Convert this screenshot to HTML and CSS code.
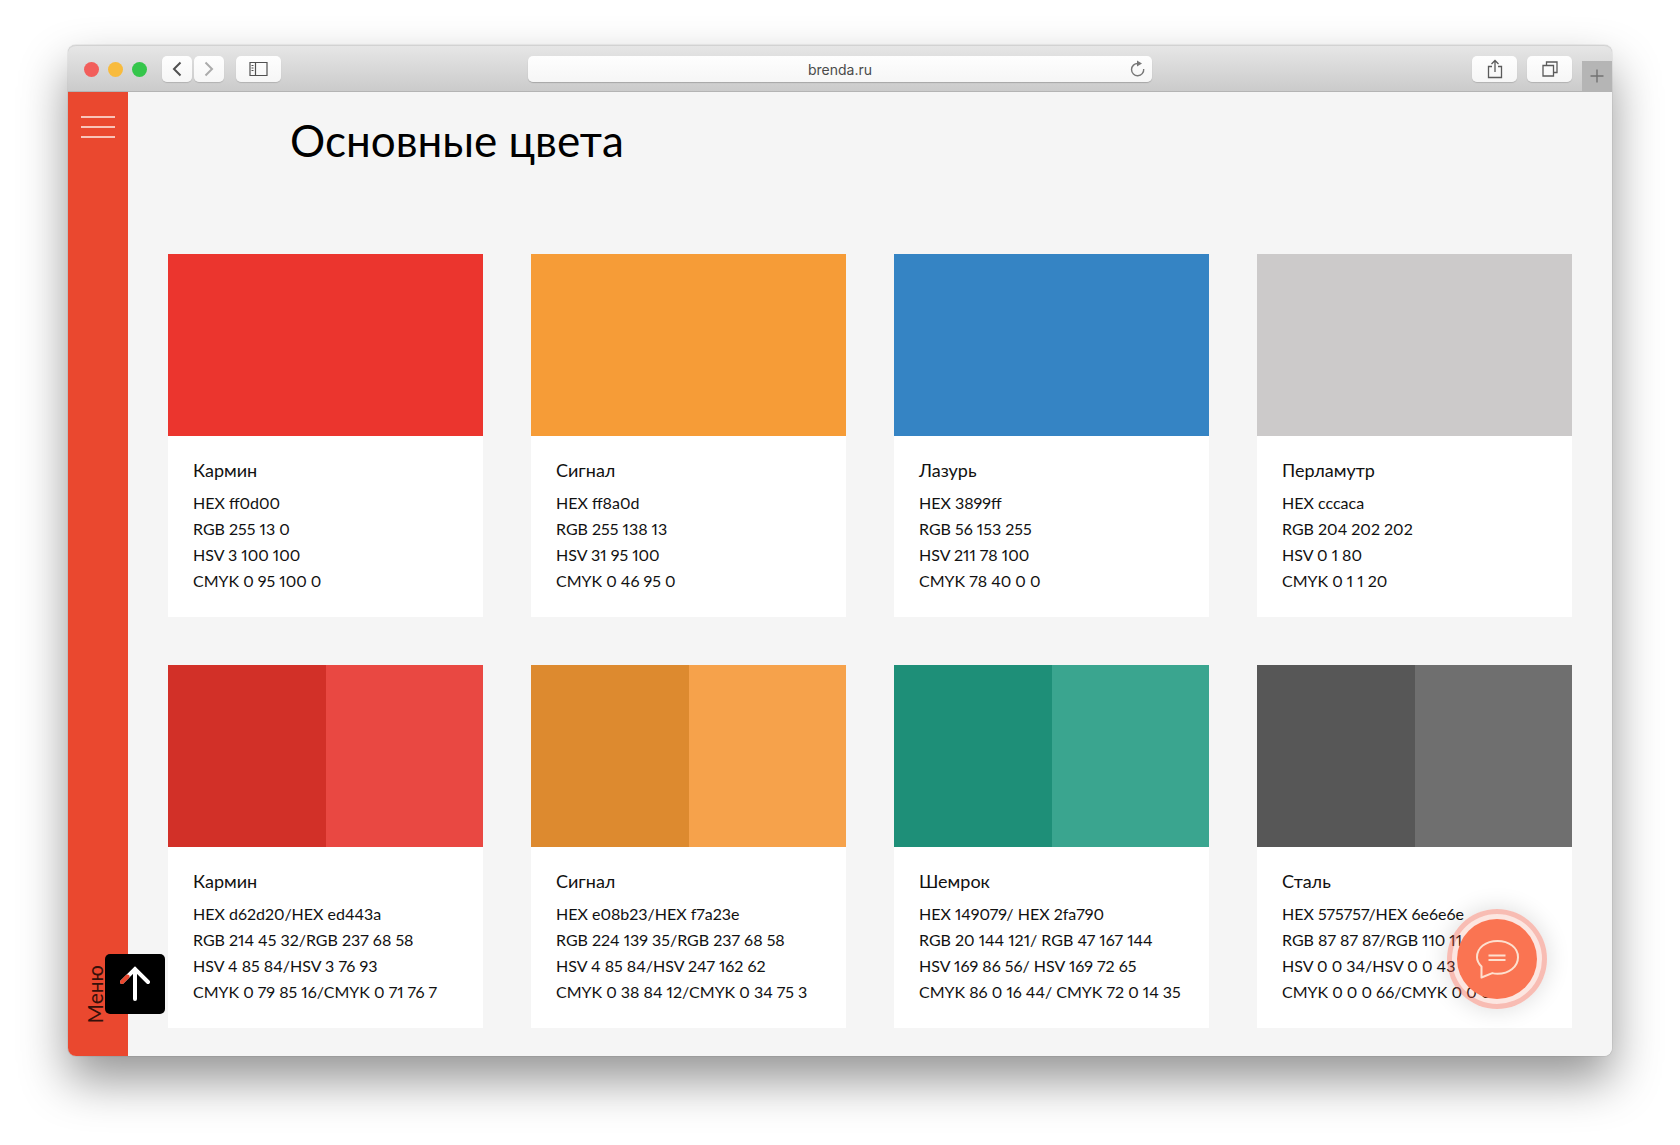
FILE: index.html
```html
<!DOCTYPE html>
<html lang="ru">
<head>
<meta charset="utf-8">
<meta name="viewport" content="width=device-width, initial-scale=1">
<title>Основные цвета</title>
<link rel="stylesheet" href="styles.css">
</head>
<body>
<div class="window">
  <header class="toolbar">
    <div class="toolbar-left">
      <div class="lights">
        <button class="light light-close" aria-label="Закрыть"></button>
        <button class="light light-minimize" aria-label="Свернуть"></button>
        <button class="light light-expand" aria-label="Развернуть"></button>
      </div>
      <div class="history">
        <button class="tool tool-small" aria-label="Назад"><svg width="12" height="16" viewBox="0 0 12 16"><path d="M9.500 1.500 3 8l6.500 6.500" stroke="#505050" stroke-width="2"/></svg></button>
        <button class="tool tool-small" aria-label="Вперёд"><svg width="12" height="16" viewBox="0 0 12 16"><path d="M2.500 1.500 9 8l-6.500 6.500" stroke="#ababab" stroke-width="2"/></svg></button>
      </div>
      <button class="tool" aria-label="Боковая панель"><svg width="20" height="16" viewBox="0 0 20 16"><path d="M1 1.500h17v13H1zM6.500 1.500v13M2.500 4.500h2M2.500 7h2M2.500 9.500h2" stroke="#505050" stroke-width="1.200"/></svg></button>
    </div>
    <div class="address">
      <input class="address-input" type="text" value="brenda.ru" aria-label="Адрес">
      <button class="reload" aria-label="Обновить"><svg width="16" height="18" viewBox="0 0 16 18"><path d="M13.700 9A6.100 6.100 0 1 1 8 3.500" stroke="#777" stroke-width="1.400"/><path d="M7 .4v6.200l5-3.100z" fill="#777"/></svg></button>
    </div>
    <div class="toolbar-right">
      <button class="tool" aria-label="Поделиться"><svg width="16" height="20" viewBox="0 0 16 20"><path d="M5 7.500H1.500v11h13v-11H11M8 13V1.500M4.500 5 8 1.500 11.500 5" stroke="#5a5a5a" stroke-width="1.300"/></svg></button>
      <button class="tool" aria-label="Вкладки"><svg width="16" height="16" viewBox="0 0 16 16"><path d="M1 4.500h10.500V15H1zM4.500 4.500V1H15v10.500h-3.500" stroke="#5a5a5a" stroke-width="1.300"/></svg></button>
      <button class="new-tab" aria-label="Новая вкладка"><svg width="14" height="14" viewBox="0 0 14 14"><path d="M7 .5v13M.5 7h13" stroke="#727272" stroke-width="1.400"/></svg></button>
    </div>
  </header>
  <div class="page">
    <nav class="sidebar">
      <button class="burger" aria-label="Открыть меню"><span></span><span></span><span></span></button>
      <a class="menu-link" href="#menu">Меню</a>
    </nav>
    <main class="content">
      <h1 class="heading">Основные цвета</h1>
      <div class="palette">
        <article class="card">
          <div class="swatch"><div class="carmine"></div></div>
          <div class="details"><h2>Кармин</h2><p>HEX ff0d00</p><p>RGB 255 13 0</p><p>HSV 3 100 100</p><p>CMYK 0 95 100 0</p></div>
        </article>
        <article class="card">
          <div class="swatch"><div class="signal"></div></div>
          <div class="details"><h2>Сигнал</h2><p>HEX ff8a0d</p><p>RGB 255 138 13</p><p>HSV 31 95 100</p><p>CMYK 0 46 95 0</p></div>
        </article>
        <article class="card">
          <div class="swatch"><div class="azure"></div></div>
          <div class="details"><h2>Лазурь</h2><p>HEX 3899ff</p><p>RGB 56 153 255</p><p>HSV 211 78 100</p><p>CMYK 78 40 0 0</p></div>
        </article>
        <article class="card">
          <div class="swatch"><div class="pearl"></div></div>
          <div class="details"><h2>Перламутр</h2><p>HEX cccaca</p><p>RGB 204 202 202</p><p>HSV 0 1 80</p><p>CMYK 0 1 1 20</p></div>
        </article>
        <article class="card">
          <div class="swatch"><div class="carmine-dark"></div><div class="carmine-light"></div></div>
          <div class="details"><h2>Кармин</h2><p>HEX d62d20/HEX ed443a</p><p>RGB 214 45 32/RGB 237 68 58</p><p>HSV 4 85 84/HSV 3 76 93</p><p>CMYK 0 79 85 16/CMYK 0 71 76 7</p></div>
        </article>
        <article class="card">
          <div class="swatch"><div class="signal-dark"></div><div class="signal-light"></div></div>
          <div class="details"><h2>Сигнал</h2><p>HEX e08b23/HEX f7a23e</p><p>RGB 224 139 35/RGB 237 68 58</p><p>HSV 4 85 84/HSV 247 162 62</p><p>CMYK 0 38 84 12/CMYK 0 34 75 3</p></div>
        </article>
        <article class="card">
          <div class="swatch"><div class="shamrock-dark"></div><div class="shamrock-light"></div></div>
          <div class="details"><h2>Шемрок</h2><p>HEX 149079/ HEX 2fa790</p><p>RGB 20 144 121/ RGB 47 167 144</p><p>HSV 169 86 56/ HSV 169 72 65</p><p>CMYK 86 0 16 44/ CMYK 72 0 14 35</p></div>
        </article>
        <article class="card">
          <div class="swatch"><div class="steel-dark"></div><div class="steel-light"></div></div>
          <div class="details"><h2>Сталь</h2><p>HEX 575757/HEX 6e6e6e</p><p>RGB 87 87 87/RGB 110 11</p><p>HSV 0 0 34/HSV 0 0 43</p><p>CMYK 0 0 0 66/CMYK 0 0 0</p></div>
        </article>
      </div>
    </main>
    <button class="to-top" aria-label="Наверх"><svg width="30" height="36" viewBox="0 0 30 36"><path d="M15 33V3M2 16 15 3l13 13" stroke="#fff" stroke-width="4" stroke-linecap="round"/><path d="M2 16 7.500 10.500" stroke="#e8482f" stroke-width="4" stroke-linecap="round"/></svg></button>
    <button class="chat" aria-label="Чат"><span class="chat-disc"><svg width="44" height="40" viewBox="0 0 44 40"><path d="M6.500 38.500V27.500C3.800 24.700 2 21.500 2 18.200 2 8.800 10.800 2 22.500 2S43 8.800 43 18.200s-8.800 16.500-20.500 16.500c-2 0-3.600-.2-5.200-.6zM13.500 16.500h17M13.500 21h17" stroke="#fde0cf" stroke-width="2" stroke-linejoin="round"/></svg></span></button>
  </div>
</div>
</body>
</html>
```
FILE: styles.css
```css
* {
  box-sizing: border-box;
}

body {
  margin: 0;
  padding: 45px 68px 90px;
  background: #fff;
  color: #111;
  font-family: Lato, "Open Sans", sans-serif;
}

h1, h2, p {
  margin: 0;
  font-weight: 400;
}

button {
  padding: 0;
  border: 0;
  background: none;
}

svg {
  display: block;
  fill: none;
}

.window {
  border-radius: 8px;
  box-shadow: 0 0 1px rgba(0, 0, 0, .5), 0 24px 48px rgba(0, 0, 0, .42);
}

.toolbar {
  display: grid;
  grid-template-columns: 460fr 624fr 460fr;
  align-items: center;
  height: 47px;
  padding-top: 1px;
  border-top: 1px solid #d2d2d2;
  border-bottom: 1px solid #b4b4b4;
  border-radius: 8px 8px 0 0;
  background: linear-gradient(#e6e6e6, #cbcbcb);
}

.toolbar-left,
.toolbar-right {
  display: flex;
  align-items: center;
}

.toolbar-left {
  gap: 12px;
  padding-left: 16px;
}

.toolbar-right {
  justify-content: flex-end;
  gap: 10px;
  height: 100%;
}

.lights {
  display: flex;
  gap: 9px;
  margin-right: 3px;
}

.light {
  width: 15px;
  height: 15px;
  border-radius: 50%;
}

.light-close { background: #f25e5b; }
.light-minimize { background: #f8bb3d; }
.light-expand { background: #35c64b; }

.history {
  display: flex;
  gap: 2px;
}

.tool {
  display: grid;
  place-items: center;
  width: 45px;
  height: 26px;
  border-radius: 5px;
  background: linear-gradient(#fefefe, #f6f6f6);
  box-shadow: 0 1px 1px rgba(0, 0, 0, .15);
}

.tool-small {
  width: 30px;
}

.new-tab {
  display: grid;
  place-items: center;
  align-self: flex-end;
  width: 30px;
  height: 30px;
  background: #b5b5b5;
}

.address {
  display: flex;
  align-items: center;
  height: 26px;
  padding: 0 6px 0 22px;
  border-radius: 5px;
  background: linear-gradient(#fefefe, #f6f6f6);
  box-shadow: 0 1px 1px rgba(0, 0, 0, .2);
}

.address-input {
  flex: 1;
  min-width: 0;
  padding: 1px 0 0;
  border: 0;
  background: none;
  color: #4a4a4a;
  font: 14px/20px Inter, sans-serif;
  text-align: center;
}

.reload {
  display: grid;
  place-items: center;
  width: 16px;
}

.page {
  position: relative;
  display: flex;
}

.sidebar {
  display: flex;
  flex-direction: column;
  align-items: center;
  justify-content: space-between;
  flex: none;
  width: 60px;
  padding: 24px 0 32px;
  border-radius: 0 0 0 8px;
  background: #ea482f;
}

.burger {
  display: grid;
  gap: 8px;
  width: 34px;
}

.burger span {
  height: 2px;
  background: #f9c3b8;
}

.menu-link {
  padding-left: 6px;
  color: #35100a;
  font-size: 21px;
  line-height: 24px;
  text-decoration: none;
  writing-mode: vertical-rl;
  transform: rotate(180deg);
}

.content {
  flex: 1;
  min-width: 0;
  padding: 20px 40px 28px;
  border-radius: 0 0 8px 0;
  background: #f5f5f5;
}

.heading {
  padding-left: 122px;
  color: #000;
  font-size: 44px;
  line-height: 56px;
}

.palette {
  display: grid;
  grid-template-columns: repeat(4, 1fr);
  gap: 48px;
  margin-top: 86px;
}

.card {
  background: #fff;
}

.swatch {
  display: flex;
  height: 182px;
}

.swatch div {
  flex: 1;
}

.carmine { background: #eb352e; }
.signal { background: #f69c37; }
.azure { background: #3584c4; }
.pearl { background: #cccaca; }
.carmine-dark { background: #d23028; }
.carmine-light { background: #e94842; }
.signal-dark { background: #dd8a2f; }
.signal-light { background: #f6a24b; }
.shamrock-dark { background: #1e8f78; }
.shamrock-light { background: #3aa58f; }
.steel-dark { background: #575757; }
.steel-light { background: #6f6f6f; }

.details {
  padding: 21px 0 23px 25px;
  font-size: 16px;
  font-variant-numeric: proportional-nums;
  line-height: 26px;
  white-space: nowrap;
}

.details h2 {
  margin-bottom: 7px;
  font-size: 18px;
  line-height: 26px;
}

.to-top {
  position: absolute;
  bottom: 42px;
  left: 37px;
  display: grid;
  place-items: center;
  width: 60px;
  height: 60px;
  border-radius: 5px;
  background: #000;
}

.chat {
  position: absolute;
  right: 65px;
  bottom: 47px;
  display: grid;
  place-items: center;
  width: 100px;
  height: 100px;
  border: 5px solid rgba(236, 80, 60, .28);
  border-radius: 50%;
  background: rgba(235, 100, 70, .16);
  box-shadow: 0 0 24px rgba(0, 0, 0, .14);
}

.chat-disc {
  display: grid;
  place-items: center;
  width: 80px;
  height: 80px;
  border-radius: 50%;
  background: #fa7452;
}
```
